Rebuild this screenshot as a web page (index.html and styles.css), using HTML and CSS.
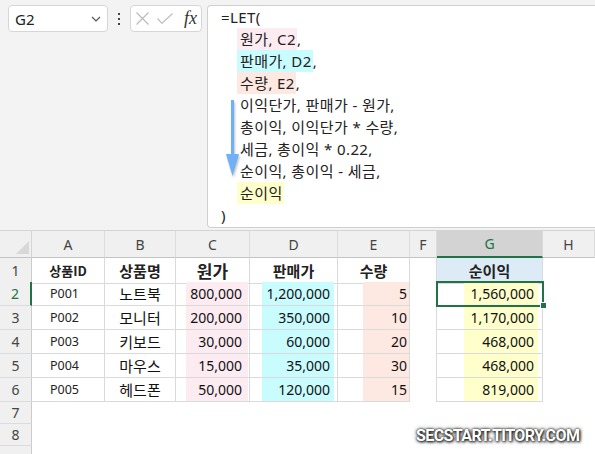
FILE: index.html
```html
<!DOCTYPE html>
<html>
<head>
  <meta charset="UTF-8">
  <title>LET 함수 - 순이익 계산</title>
  <link rel="stylesheet" href="styles.css">
</head>
<body>
  <div class="toolbar">
    <div class="namebox">
      <span class="name">G2</span>
      <svg class="chevron" width="10" height="6" viewBox="0 0 10 6">
        <polyline points="1,1 5,5 9,1" fill="none" stroke="#555" stroke-width="1.2"/>
      </svg>
    </div>
    <div class="dots"><i></i><i></i><i></i></div>
    <div class="fxbox">
      <svg class="cancel" width="13" height="13" viewBox="0 0 13 13">
        <path d="M0.5 0.5 L12.5 12.5 M12.5 0.5 L0.5 12.5" stroke="#b9b9b9" stroke-width="1.1" fill="none"/>
      </svg>
      <svg class="enter" width="16" height="11" viewBox="0 0 16 11">
        <polyline points="0.5,5.5 5,10.3 15.5,0.5" stroke="#b9b9b9" stroke-width="1.1" fill="none"/>
      </svg>
      <span class="fx">fx</span>
    </div>
    <div class="formula">
      <div class="line">=LET(</div>
      <div class="line indent"><span class="mark pink">원가, C2</span>,</div>
      <div class="line indent"><span class="mark cyan">판매가, D2</span>,</div>
      <div class="line indent"><span class="mark salmon">수량, E2</span>,</div>
      <div class="line indent">이익단가, 판매가 - 원가,</div>
      <div class="line indent">총이익, 이익단가 * 수량,</div>
      <div class="line indent">세금, 총이익 * 0.22,</div>
      <div class="line indent">순이익, 총이익 - 세금,</div>
      <div class="line indent"><span class="mark yellow">순이익</span></div>
      <div class="line">)</div>
      <svg class="arrow" width="17" height="80" viewBox="0 0 17 80">
        <line x1="8.5" y1="1" x2="8.5" y2="58" stroke="#6fb0f7" stroke-width="3"/>
        <polygon points="2,55 15,55 8.5,77" fill="#6fb0f7"/>
      </svg>
    </div>
  </div>

  <div class="sheet">
    <div class="row head">
      <div class="corner"><i></i></div>
      <div class="colh">A</div>
      <div class="colh">B</div>
      <div class="colh">C</div>
      <div class="colh">D</div>
      <div class="colh">E</div>
      <div class="colh">F</div>
      <div class="colh sel">G</div>
      <div class="colh">H</div>
    </div>
    <div class="row">
      <div class="rh">1</div>
      <div class="c title small">상품ID</div>
      <div class="c title">상품명</div>
      <div class="c title big">원가</div>
      <div class="c title">판매가</div>
      <div class="c title">수량</div>
      <div class="f"></div>
      <div class="c title result">순이익</div>
      <div></div>
    </div>
    <div class="row">
      <div class="rh sel">2</div>
      <div class="c id">P001</div>
      <div class="c name">노트북</div>
      <div class="c num"><span class="hl col-c">800,000</span></div>
      <div class="c num"><span class="hl col-d">1,200,000</span></div>
      <div class="c num"><span class="hl col-e">5</span></div>
      <div class="f"></div>
      <div class="c num active"><span class="hl col-g">1,560,000</span></div>
      <div></div>
    </div>
    <div class="row">
      <div class="rh">3</div>
      <div class="c id">P002</div>
      <div class="c name">모니터</div>
      <div class="c num"><span class="hl col-c">200,000</span></div>
      <div class="c num"><span class="hl col-d">350,000</span></div>
      <div class="c num"><span class="hl col-e">10</span></div>
      <div class="f"></div>
      <div class="c num"><span class="hl col-g">1,170,000</span></div>
      <div></div>
    </div>
    <div class="row">
      <div class="rh">4</div>
      <div class="c id">P003</div>
      <div class="c name">키보드</div>
      <div class="c num"><span class="hl col-c">30,000</span></div>
      <div class="c num"><span class="hl col-d">60,000</span></div>
      <div class="c num"><span class="hl col-e">20</span></div>
      <div class="f"></div>
      <div class="c num"><span class="hl col-g">468,000</span></div>
      <div></div>
    </div>
    <div class="row">
      <div class="rh">5</div>
      <div class="c id">P004</div>
      <div class="c name">마우스</div>
      <div class="c num"><span class="hl col-c">15,000</span></div>
      <div class="c num"><span class="hl col-d">35,000</span></div>
      <div class="c num"><span class="hl col-e">30</span></div>
      <div class="f"></div>
      <div class="c num"><span class="hl col-g">468,000</span></div>
      <div></div>
    </div>
    <div class="row">
      <div class="rh">6</div>
      <div class="c id">P005</div>
      <div class="c name">헤드폰</div>
      <div class="c num"><span class="hl col-c">50,000</span></div>
      <div class="c num"><span class="hl col-d">120,000</span></div>
      <div class="c num"><span class="hl col-e">15</span></div>
      <div class="f"></div>
      <div class="c num"><span class="hl col-g">819,000</span></div>
      <div></div>
    </div>
    <div class="row short">
      <div class="rh">7</div>
    </div>
    <div class="row short">
      <div class="rh">8</div>
    </div>
    <div class="row short">
      <div class="rh"></div>
    </div>
  </div>

  <div class="watermark">SECSTART.TITORY.COM</div>
</body>
</html>
```

FILE: styles.css
```css
html, body {
  margin: 0;
}
body {
  position: relative;
  width: 595px;
  height: 454px;
  overflow: hidden;
  background: #fff;
  color: #111;
  font-family: "Noto Sans", "Noto Sans CJK KR", sans-serif;
}
* {
  box-sizing: border-box;
}

/* formula bar */
.toolbar {
  display: flex;
  align-items: flex-start;
  height: 230px;
  padding: 5px 0 0 8px;
  background: #f3f3f3;
}
.namebox {
  display: flex;
  align-items: center;
  justify-content: space-between;
  width: 100px;
  height: 27px;
  padding: 0 6px;
  background: #fff;
  border: 1px solid #d6d6d6;
  border-radius: 4px;
}
.name {
  font-size: 15px;
  color: #222;
}
.dots {
  display: flex;
  flex-direction: column;
  align-items: center;
  justify-content: center;
  gap: 3px;
  width: 22px;
  height: 27px;
}
.dots i {
  width: 2px;
  height: 2px;
  background: #444;
}
.fxbox {
  display: flex;
  align-items: center;
  width: 72px;
  height: 27px;
  padding: 0 0 0 5px;
  background: #fff;
  border: 1px solid #d6d6d6;
  border-radius: 4px;
}
.enter {
  margin-left: 8px;
}
.fx {
  margin-left: 11px;
  font-family: "Liberation Serif", "DejaVu Serif", serif;
  font-style: italic;
  font-size: 18px;
  color: #333;
}
.formula {
  position: relative;
  flex: 1;
  height: 223px;
  margin-left: 5px;
  padding-left: 13px;
  background: #fff;
  border: 1px solid #d0d0d0;
  border-right: none;
  border-radius: 4px 0 0 4px;
  font-size: 15px;
  letter-spacing: 0.4px;
  line-height: 22px;
  color: #222;
}
.line {
  height: 22px;
  white-space: nowrap;
}
.indent {
  padding-left: 19px;
}
.mark {
  display: inline-block;
  margin-left: -3px;
  padding: 0 1px 0 3px;
}
.pink { background: #fdebf2; }
.cyan { background: #c9fcff; }
.salmon { background: #fde9e2; }
.yellow { background: #ffffcc; }
.arrow {
  position: absolute;
  left: 16px;
  top: 93px;
  filter: drop-shadow(1px 2px 1px rgba(0, 0, 0, 0.25));
}

/* grid */
.row {
  display: grid;
  grid-template-columns: 32px 73px 71px 74px 88px 72px 27px 106px 52px;
  height: 24px;
}
.row.short {
  height: 22px;
}
.row > div {
  display: flex;
  align-items: center;
  min-width: 0;
}
.row.head {
  height: 28px;
  background: #f0f0f0;
  border-top: 1px solid #d4d4d4;
}
.corner {
  justify-content: flex-end;
  align-items: flex-end !important;
  padding: 0 2px 3px 0;
  border-right: 1px solid #d4d4d4;
  border-bottom: 1px solid #c4c4c4;
}
.corner i {
  width: 0;
  height: 0;
  border-left: 13px solid transparent;
  border-bottom: 13px solid #d8d8d8;
}
.colh {
  justify-content: center;
  font-size: 14px;
  color: #444;
  border-right: 1px solid #dcdcdc;
  border-bottom: 1px solid #c4c4c4;
}
.colh.sel {
  background: #d3d3d3;
  color: #217346;
  border-bottom: 2px solid #217346;
}
.rh {
  justify-content: center;
  font-size: 14px;
  color: #444;
  background: #f0f0f0;
  border-right: 1px solid #cccccc;
  border-bottom: 1px solid #dcdcdc;
}
.rh.sel {
  color: #217346;
  border-right: 2px solid #217346;
}
.c {
  border-right: 1px solid #dadada;
  border-bottom: 1px solid #dadada;
}
.f {
  border-right: 1px solid #dadada;
}
.title {
  justify-content: center;
  font-family: "Noto Sans CJK KR", sans-serif;
  font-size: 15px;
  font-weight: bold;
  color: #222;
}
.title.small {
  font-size: 13px;
}
.title.big {
  font-size: 17px;
}
.result {
  background: #ddebf7;
}
.id {
  padding-left: 18px;
  font-size: 12.5px;
  color: #222;
}
.name {
  font-size: 15px;
}
.c.name {
  justify-content: center;
  font-family: "Noto Sans CJK KR", sans-serif;
  color: #111;
}
.num {
  align-items: stretch !important;
  font-size: 14px;
}
.hl {
  display: flex;
  flex: 1;
  align-items: center;
  justify-content: flex-end;
}
.col-c { margin: 0 1px 0 10px; padding-right: 6px; background: #fdebf2; }
.col-d { margin: 0 3px 0 12px; padding-right: 4px; background: #c9fcff; }
.col-e { margin: 0 0 0 25px; padding-right: 2px; background: #fde9e2; }
.col-g { margin: 0 4px 0 27px; padding-right: 4px; background: #ffffcc; }
.active {
  position: relative;
  outline: 2px solid #217346;
  outline-offset: -1px;
}
.active::after {
  content: "";
  position: absolute;
  right: -5px;
  bottom: -4px;
  width: 5px;
  height: 5px;
  background: #217346;
  border: 1px solid #fff;
}

.watermark {
  position: absolute;
  left: 416px;
  top: 426px;
  font-family: Roboto, "Noto Sans", sans-serif;
  font-weight: bold;
  font-size: 16px;
  letter-spacing: -0.6px;
  color: #fff;
  text-shadow: 0 0 2px #222, 1px 1px 3px #000, 0 0 4px #555;
}
```
